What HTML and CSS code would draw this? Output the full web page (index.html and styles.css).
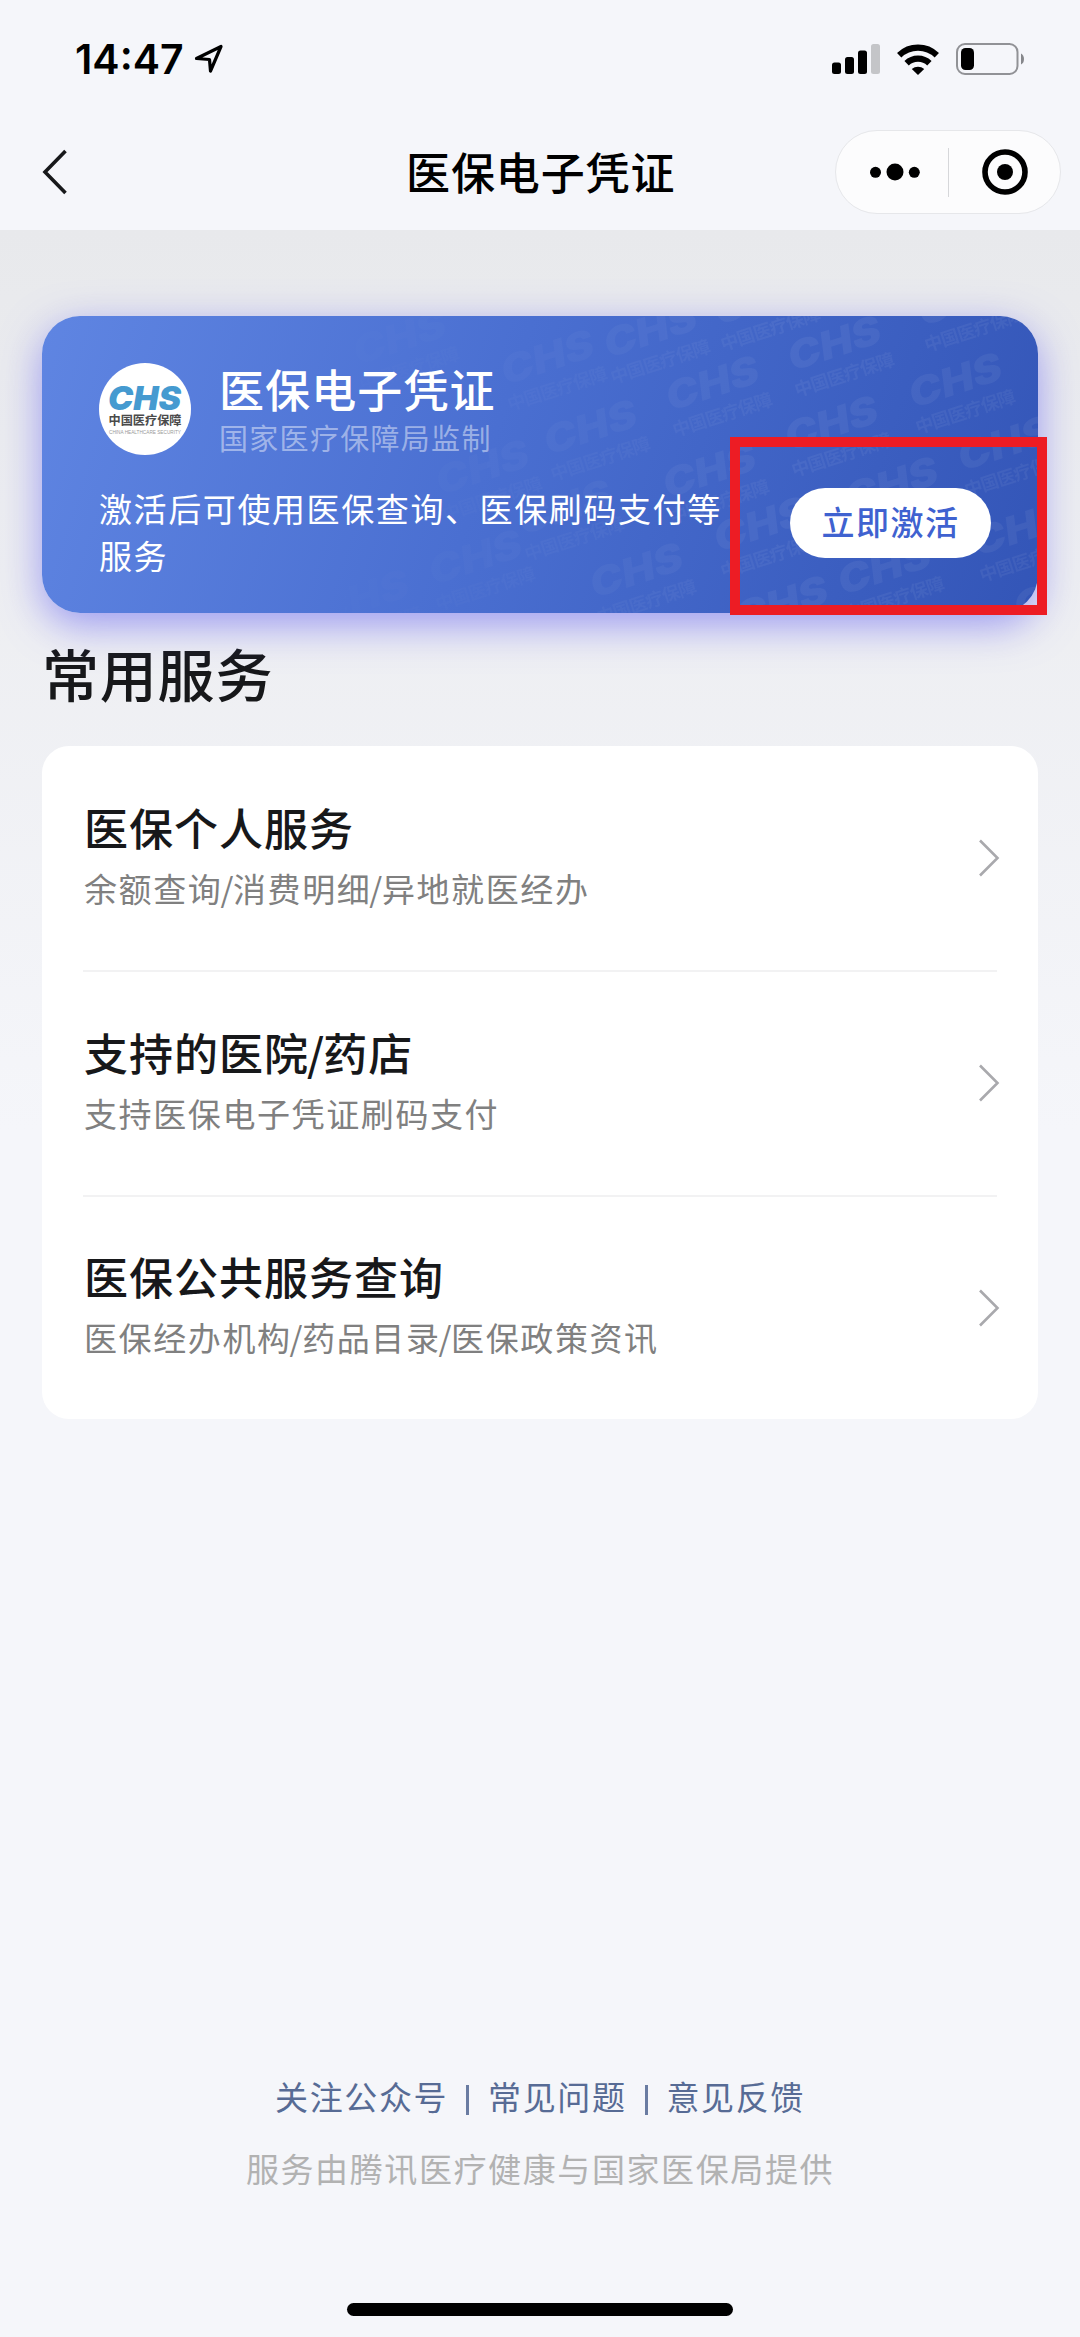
FILE: index.html
```html
<!DOCTYPE html>
<html lang="zh-CN">
<head>
  <meta charset="UTF-8">
  <title>医保电子凭证</title>
  <link rel="stylesheet" href="styles.css">
</head>
<body>
  <header class="header">
    <div class="status-bar">
      <span class="time">14:47</span>
      <svg class="location" width="30" height="30" viewBox="0 0 30 30">
        <path d="M2.5 14.5 L27 2.5 L16.5 27 L15.5 15.5 Z" fill="none" stroke="#000" stroke-width="3.2" stroke-linejoin="round"/>
      </svg>
      <div class="status-icons">
        <svg width="48" height="30" viewBox="0 0 48 30">
          <rect x="0" y="18.5" width="9" height="11.5" rx="2.5"/>
          <rect x="13" y="13" width="9" height="17" rx="2.5"/>
          <rect x="26" y="6.5" width="9" height="23.5" rx="2.5"/>
          <rect x="39" y="0" width="9" height="30" rx="2.5" fill="#c4c5c8"/>
        </svg>
        <svg width="42" height="31" viewBox="0 0 42 31">
          <g fill="none" stroke="#000" stroke-width="6.2">
            <path d="M2.2 11.2 A27 27 0 0 1 39.8 11.2"/>
            <path d="M9.6 19.2 A16.3 16.3 0 0 1 32.4 19.2"/>
          </g>
          <path d="M14.8 25 A9.5 9.5 0 0 1 27.2 25 L21 31 Z"/>
        </svg>
        <svg width="69" height="32" viewBox="0 0 69 32">
          <rect x="1" y="1" width="60.5" height="30" rx="8" fill="none" stroke="#919296" stroke-width="2"/>
          <rect x="5" y="5" width="13" height="22" rx="4.5"/>
          <path d="M65 10.5 Q68 12 68 16 Q68 20 65 21.5 Z" fill="#86878b"/>
        </svg>
      </div>
    </div>
    <div class="nav-bar">
      <svg class="back" width="26" height="46" viewBox="0 0 26 46">
        <path d="M23.5 2 L3 23 L23.5 44" fill="none" stroke="#17181a" stroke-width="3.6"/>
      </svg>
      <h1 class="nav-title">医保电子凭证</h1>
      <div class="capsule">
        <svg class="dots" width="50" height="18" viewBox="0 0 50 18">
          <circle cx="5.5" cy="9.3" r="5.5"/>
          <circle cx="25" cy="9" r="8.5"/>
          <circle cx="44.3" cy="9.3" r="5.5"/>
        </svg>
        <span class="capsule-line"></span>
        <svg width="46" height="46" viewBox="0 0 46 46">
          <circle cx="23" cy="23" r="20" fill="none" stroke="#000" stroke-width="5.6"/>
          <circle cx="23" cy="23" r="8"/>
        </svg>
      </div>
    </div>
  </header>

  <main class="content">
    <section class="card">
      <svg class="watermark" width="996" height="297" viewBox="0 0 996 297">
        <defs>
          <g id="mark" transform="rotate(-18)">
            <text class="mark-chs" x="-48" y="14" textLength="96" lengthAdjust="spacingAndGlyphs">CHS</text>
            <text class="mark-cn" x="-52" y="40" textLength="104">中国医疗保障</text>
          </g>
        </defs>
        <use href="#mark" x="357" y="21"/>
        <use href="#mark" x="440" y="151"/>
        <use href="#mark" x="433" y="241"/>
        <use href="#mark" x="320" y="281"/>
        <use href="#mark" x="505" y="41"/>
        <use href="#mark" x="548" y="111"/>
        <use href="#mark" x="522" y="191"/>
        <use href="#mark" x="608" y="14"/>
        <use href="#mark" x="594" y="254"/>
        <use href="#mark" x="670" y="67"/>
        <use href="#mark" x="667" y="154"/>
        <use href="#mark" x="718" y="-19"/>
        <use href="#mark" x="718" y="208"/>
        <use href="#mark" x="792" y="27"/>
        <use href="#mark" x="789" y="107"/>
        <use href="#mark" x="739" y="287"/>
        <use href="#mark" x="849" y="168"/>
        <use href="#mark" x="842" y="251"/>
        <use href="#mark" x="913" y="64"/>
        <use href="#mark" x="922" y="-18"/>
        <use href="#mark" x="962" y="127"/>
        <use href="#mark" x="977" y="212"/>
        <use href="#mark" x="1018" y="277"/>
      </svg>
      <div class="card-head">
        <svg class="logo" width="92" height="92" viewBox="0 0 92 92">
          <circle cx="46" cy="46" r="46" fill="#fff"/>
          <text class="logo-chs" x="9" y="47" textLength="73" lengthAdjust="spacingAndGlyphs">CHS</text>
          <text class="logo-cn" x="9.5" y="62" textLength="73" lengthAdjust="spacingAndGlyphs">中国医疗保障</text>
          <text class="logo-en" x="10" y="70.5" textLength="72" lengthAdjust="spacingAndGlyphs">CHINA HEALTHCARE SECURITY</text>
        </svg>
        <div class="card-titles">
          <h2 class="card-title">医保电子凭证</h2>
          <p class="card-sub">国家医疗保障局监制</p>
        </div>
      </div>
      <div class="card-body">
        <p class="card-desc">激活后可使用医保查询、医保刷码支付等服务</p>
        <button class="activate">立即激活</button>
      </div>
      <span class="highlight"></span>
    </section>

    <h2 class="section-title">常用服务</h2>

    <ul class="services">
      <li class="service">
        <div>
          <h3 class="service-name">医保个人服务</h3>
          <p class="service-desc">余额查询<i>/</i>消费明细<i>/</i>异地就医经办</p>
        </div>
        <svg class="arrow" width="21" height="38" viewBox="0 0 21 38"><path d="M1 1.5 L18.5 19 L1 36.5"/></svg>
      </li>
      <li class="service">
        <div>
          <h3 class="service-name">支持的医院<i>/</i>药店</h3>
          <p class="service-desc">支持医保电子凭证刷码支付</p>
        </div>
        <svg class="arrow" width="21" height="38" viewBox="0 0 21 38"><path d="M1 1.5 L18.5 19 L1 36.5"/></svg>
      </li>
      <li class="service">
        <div>
          <h3 class="service-name">医保公共服务查询</h3>
          <p class="service-desc">医保经办机构<i>/</i>药品目录<i>/</i>医保政策资讯</p>
        </div>
        <svg class="arrow" width="21" height="38" viewBox="0 0 21 38"><path d="M1 1.5 L18.5 19 L1 36.5"/></svg>
      </li>
    </ul>
  </main>

  <footer class="footer">
    <nav class="links">
      <a>关注公众号</a>
      <span class="sep"></span>
      <a>常见问题</a>
      <span class="sep"></span>
      <a>意见反馈</a>
    </nav>
    <p class="provider">服务由腾讯医疗健康与国家医保局提供</p>
    <div class="home-bar"></div>
  </footer>
</body>
</html>
```

FILE: styles.css
```css
* {
  box-sizing: border-box;
  margin: 0;
  padding: 0;
}

body {
  display: flex;
  flex-direction: column;
  width: 1080px;
  height: 2337px;
  overflow: hidden;
  font-family: "Noto Sans CJK SC", sans-serif;
  background: #f5f6fa;
  color: #17181a;
}

svg {
  display: block;
  flex: none;
}

/* header */
.header {
  height: 230px;
  background: #f5f6fa;
}

.status-bar {
  display: flex;
  align-items: center;
  height: 118px;
  padding: 0 55px 0 75px;
}

.time {
  width: 110px;
  font-family: Inter, sans-serif;
  font-size: 41px;
  font-weight: 600;
  line-height: 50px;
  color: #000;
}

.location {
  margin-left: 9px;
}

.status-icons {
  display: flex;
  align-items: center;
  gap: 17px;
  margin-left: auto;
}

.nav-bar {
  display: flex;
  align-items: center;
  height: 108px;
  padding: 0 19px 0 42px;
}

.nav-title {
  margin-left: 338px;
  padding-bottom: 3px;
  font-size: 44px;
  font-weight: 500;
  letter-spacing: 0.9px;
  line-height: 60px;
  color: #000;
}

.capsule {
  display: flex;
  align-items: center;
  width: 226px;
  height: 84px;
  margin-left: auto;
  padding-left: 34px;
  border: 1px solid #e6e7ea;
  border-radius: 42px;
  background: #fcfcfd;
}

.capsule-line {
  width: 1px;
  height: 49px;
  margin: 0 33px 0 28px;
  background: #d6d7da;
}

/* content */
.content {
  flex: 1;
  padding: 86px 42px 0;
  background: linear-gradient(#e8e9ec 0, #f5f6fa 900px);
}

.card {
  position: relative;
  height: 297px;
  padding: 47px 47px 0 57px;
  border-radius: 38px;
  background: linear-gradient(108deg, #5f85e2 0%, #4a6fd1 45%, #3355b7 100%);
  box-shadow: 0 12px 40px rgba(88, 84, 240, 0.55);
  color: #fff;
}

.watermark {
  position: absolute;
  top: 0;
  left: 0;
  border-radius: 38px;
  fill: rgba(255, 255, 255, 0.055);
  -webkit-mask-image: linear-gradient(90deg, transparent 25%, #000 75%);
  mask-image: linear-gradient(90deg, transparent 25%, #000 75%);
}

.mark-chs {
  font: italic 900 39px Inter, sans-serif;
}

.mark-cn {
  font-size: 18px;
  font-weight: 700;
}

.card-head {
  position: relative;
  display: flex;
}

.logo-chs {
  font: italic 900 33px Inter, sans-serif;
  fill: #459ad0;
}

.logo-cn {
  font-size: 12.5px;
  font-weight: 700;
  fill: #4a4a4a;
}

.logo-en {
  font: 4.5px "Liberation Sans", sans-serif;
  fill: #999;
}

.card-titles {
  margin-left: 28px;
}

.card-title {
  margin-top: -4px;
  font-size: 45px;
  font-weight: 500;
  letter-spacing: 1.1px;
  line-height: 60px;
}

.card-sub {
  margin-top: -2px;
  font-size: 29px;
  letter-spacing: 1.3px;
  line-height: 40px;
  color: rgba(255, 255, 255, 0.45);
}

.card-body {
  position: relative;
  display: flex;
  justify-content: space-between;
  height: 120px;
}

.card-desc {
  width: 634px;
  margin-top: 28px;
  font-size: 33px;
  letter-spacing: 1.6px;
  line-height: 47px;
}

.activate {
  width: 201px;
  height: 70px;
  margin-top: 31px;
  padding-bottom: 4px;
  border: none;
  border-radius: 35px;
  background: #fff;
  font-family: inherit;
  font-size: 33px;
  font-weight: 500;
  letter-spacing: 1.5px;
  color: #3f62d0;
}

/* red frame round the activate button */
.highlight {
  position: absolute;
  top: 121px;
  left: 688px;
  width: 317px;
  height: 178px;
  border: 10px solid #ed1c24;
}

.section-title {
  margin-top: 19px;
  font-size: 57px;
  font-weight: 500;
  letter-spacing: 0.8px;
  line-height: 80px;
}

.services {
  margin-top: 34px;
  padding: 0 41px;
  border-radius: 27px;
  background: #fff;
  list-style: none;
}

.service {
  display: flex;
  align-items: center;
  justify-content: space-between;
  height: 224.3px;
}

.service + .service {
  border-top: 2px solid #f2f2f3;
}

.service-name {
  margin: -7px 0 0 1px;
  font-size: 44px;
  font-weight: 500;
  letter-spacing: 1px;
  line-height: 60px;
}

.service-desc {
  margin: 6px 0 0 1px;
  font-size: 33px;
  letter-spacing: 1.6px;
  line-height: 50px;
  color: #808080;
}

.service i {
  margin: 0 -2px;
  font-style: normal;
}

.arrow {
  margin-right: -3px;
  fill: none;
  stroke: #a9a9ad;
  stroke-width: 2.6;
}

/* footer */
.footer {
  display: flex;
  flex-direction: column;
  align-items: center;
  height: 266px;
  font-size: 33px;
  line-height: 50px;
  letter-spacing: 1.6px;
}

.links {
  display: flex;
  align-items: center;
  color: #576b95;
}

.sep {
  width: 3px;
  height: 30px;
  margin: 8px 19px 0 18px;
  background: #6a7ca2;
}

.provider {
  margin-top: 22px;
  color: #b2b2b2;
}

.home-bar {
  width: 386px;
  height: 13px;
  margin-top: 110px;
  border-radius: 7px;
  background: #000;
}
```
